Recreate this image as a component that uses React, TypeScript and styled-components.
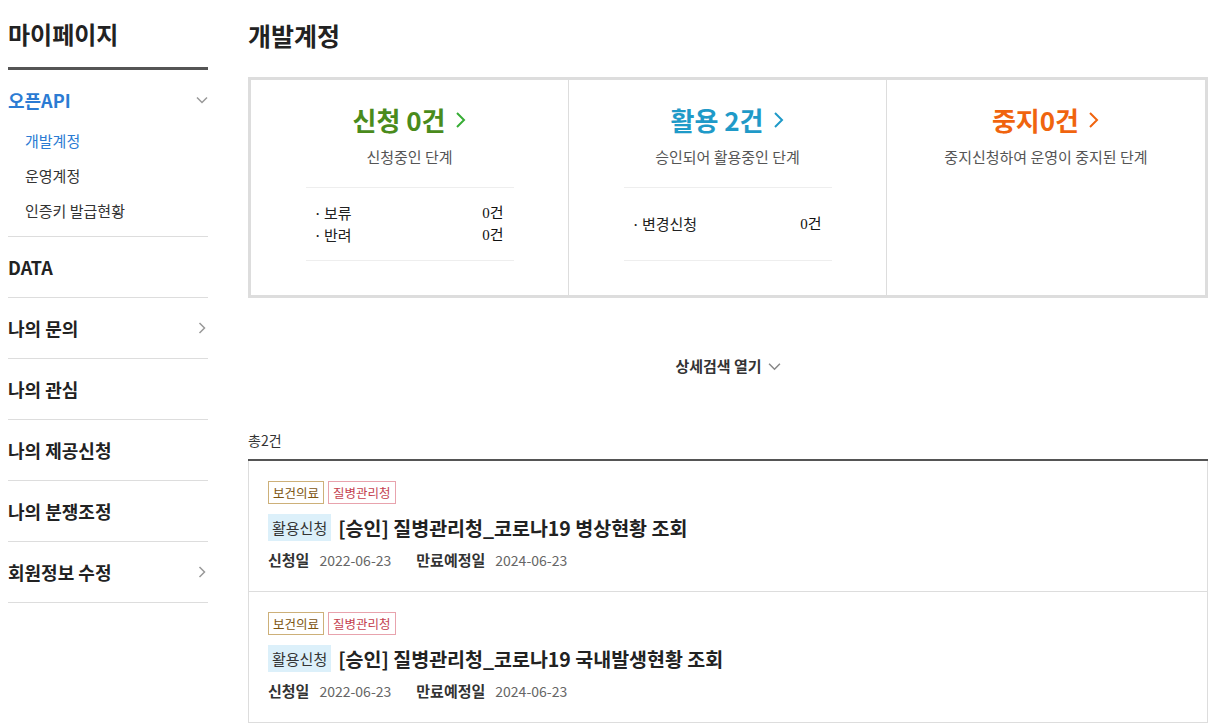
import React from 'react';
import styled, { createGlobalStyle } from 'styled-components';

const GlobalStyle = createGlobalStyle`
  body {
    margin: 0;
    background: #fff;
    font-family: 'Noto Sans CJK KR', 'Noto Sans', sans-serif;
    color: #222;
  }
  ul { margin: 0; padding: 0; list-style: none; }
`;

const Page = styled.div`
  display: flex;
  gap: 40px;
  padding-left: 8px;
  width: 1200px;
`;

const Sidebar = styled.aside`
  width: 200px;
  flex-shrink: 0;
`;

const SideTitle = styled.h2`
  margin: 0;
  padding: 18px 0 17px;
  font-size: 24px;
  line-height: 32px;
  font-weight: 700;
  color: #222;
  border-bottom: 3px solid #555;
`;

const MenuGroup = styled.li`
  border-bottom: 1px solid #ddd;
`;

const MenuHead = styled.div<{ $active?: boolean; $open?: boolean }>`
  display: flex;
  justify-content: space-between;
  align-items: center;
  height: ${p => (p.$open ? '20px' : '60px')};
  padding-top: ${p => (p.$open ? '20px' : '0')};
  font-size: 18px;
  font-weight: 700;
  line-height: 20px;
  color: ${p => (p.$active ? '#2b7bd3' : '#222')};
  box-sizing: content-box;
`;

const SubList = styled.ul`
  padding: 13px 0 8px 17px;
`;

const SubItem = styled.li<{ $active?: boolean }>`
  font-size: 15px;
  line-height: 35px;
  color: ${p => (p.$active ? '#2b7bd3' : '#333')};
`;

const Main = styled.main`
  width: 960px;
`;

const PageTitle = styled.h1`
  margin: 0 0 27px;
  padding-top: 20px;
  font-size: 25px;
  line-height: 30px;
  font-weight: 700;
  color: #222;
`;

const StatBox = styled.div`
  display: grid;
  grid-template-columns: repeat(3, 1fr);
  border: 3px solid #ddd;
`;

const StatCol = styled.div`
  display: flex;
  flex-direction: column;
  align-items: center;
  padding: 25px 0 34px;
  border-right: 1px solid #ddd;
  &:last-child { border-right: none; }
`;

const StatHead = styled.div<{ $color: string }>`
  display: flex;
  align-items: center;
  gap: 8px;
  font-size: 26px;
  line-height: 30px;
  font-weight: 700;
  color: ${p => p.$color};
`;

const StatDesc = styled.p`
  margin: 12px 0 0;
  font-size: 15px;
  line-height: 20px;
  color: #555;
`;

const StatList = styled.ul`
  display: flex;
  flex-direction: column;
  justify-content: center;
  width: 208px;
  min-height: 74px;
  margin-top: 20px;
  padding: 0 10px 0 8px;
  box-sizing: border-box;
  border-top: 1px solid #eee;
  border-bottom: 1px solid #eee;
`;

const StatRow = styled.li`
  display: flex;
  justify-content: space-between;
  font-size: 15px;
  line-height: 22px;
  color: #222;
  &::before {
    content: '·';
    margin-right: 2px;
  }
`;

const StatLabel = styled.span`
  flex: 1;
`;

const StatValue = styled.span`
  font-family: 'Liberation Serif', 'Noto Sans CJK KR', serif;
  font-size: 15px;
  color: #111;
`;

const SearchToggle = styled.button`
  display: flex;
  align-items: center;
  gap: 6px;
  margin: 55px auto 0;
  padding: 0;
  border: none;
  background: none;
  font-family: inherit;
  font-size: 15px;
  line-height: 26px;
  font-weight: 700;
  color: #333;
`;

const Total = styled.p`
  margin: 51px 0 9px;
  font-size: 14px;
  line-height: 20px;
  color: #333;
`;

const List = styled.ul`
  border-top: 2px solid #555;
`;

const Item = styled.li`
  padding: 20px 18px 21px 19px;
  border: 1px solid #ddd;
  border-top: none;
`;

const Tags = styled.div`
  display: flex;
  gap: 4px;
`;

const Tag = styled.span<{ $tone: 'field' | 'org' }>`
  padding: 0 4px;
  font-size: 12.5px;
  line-height: 21px;
  border: 1px solid ${p => (p.$tone === 'field' ? '#cdb079' : '#e8a3ad')};
  color: ${p => (p.$tone === 'field' ? '#7d5512' : '#c4414f')};
`;

const TitleRow = styled.div`
  display: flex;
  align-items: center;
  gap: 7px;
  margin-top: 10px;
`;

const Badge = styled.span`
  padding: 0 4px;
  background: #dcf0fa;
  font-size: 15px;
  line-height: 27px;
  color: #333;
`;

const ItemTitle = styled.h3`
  margin: 0;
  font-size: 19.5px;
  line-height: 27px;
  font-weight: 700;
  color: #222;
`;

const Dates = styled.div`
  display: flex;
  align-items: baseline;
  margin-top: 9px;
  line-height: 20px;
`;

const DateLabel = styled.span`
  font-size: 15px;
  font-weight: 700;
  color: #333;
  margin-right: 10px;
`;

const DateValue = styled.span`
  font-size: 14px;
  color: #666;
  margin-right: 25px;
`;

const Chevron = ({ dir, color, size = 12, width = 1.5 }: { dir: 'down' | 'right'; color: string; size?: number; width?: number }) => (
  <svg width={size} height={size} viewBox="0 0 12 12" fill="none" stroke={color} strokeWidth={width}>
    {dir === 'down' ? <polyline points="1,3.5 6,8.5 11,3.5" /> : <polyline points="3.5,1 8.5,6 3.5,11" />}
  </svg>
);

const BigChevron = ({ color }: { color: string }) => (
  <svg width="13" height="18" viewBox="0 0 13 18" fill="none" stroke={color} strokeWidth={2}>
    <polyline points="3,2 10,9 3,16" />
  </svg>
);

const stats = [
  { title: '신청 0건', color: '#4a8b1c', arrow: '#37ad35', desc: '신청중인 단계', rows: [['보류', '0건'], ['반려', '0건']] },
  { title: '활용 2건', color: '#1f9ac8', arrow: '#1f9ac8', desc: '승인되어 활용중인 단계', rows: [['변경신청', '0건']] },
  { title: '중지0건', color: '#f0640e', arrow: '#f0640e', desc: '중지신청하여 운영이 중지된 단계', rows: [] },
];

const items = [
  { title: '[승인] 질병관리청_코로나19 병상현황 조회' },
  { title: '[승인] 질병관리청_코로나19 국내발생현황 조회' },
];

const menu = [
  { name: 'DATA' },
  { name: '나의 문의', arrow: true },
  { name: '나의 관심' },
  { name: '나의 제공신청' },
  { name: '나의 분쟁조정' },
  { name: '회원정보 수정', arrow: true },
];

const App = () => (
  <>
    <GlobalStyle />
    <Page>
      <Sidebar>
        <SideTitle>마이페이지</SideTitle>
        <ul>
          <MenuGroup>
            <MenuHead $active $open>
              오픈API
              <Chevron dir="down" color="#999" />
            </MenuHead>
            <SubList>
              <SubItem $active>개발계정</SubItem>
              <SubItem>운영계정</SubItem>
              <SubItem>인증키 발급현황</SubItem>
            </SubList>
          </MenuGroup>
          {menu.map(m => (
            <MenuGroup key={m.name}>
              <MenuHead>
                {m.name}
                {m.arrow && <Chevron dir="right" color="#999" />}
              </MenuHead>
            </MenuGroup>
          ))}
        </ul>
      </Sidebar>
      <Main>
        <PageTitle>개발계정</PageTitle>
        <StatBox>
          {stats.map(s => (
            <StatCol key={s.title}>
              <StatHead $color={s.color}>
                {s.title}
                <BigChevron color={s.arrow} />
              </StatHead>
              <StatDesc>{s.desc}</StatDesc>
              {s.rows.length > 0 && (
                <StatList>
                  {s.rows.map(([label, value]) => (
                    <StatRow key={label}>
                      <StatLabel>{label}</StatLabel>
                      <StatValue>{value}</StatValue>
                    </StatRow>
                  ))}
                </StatList>
              )}
            </StatCol>
          ))}
        </StatBox>
        <SearchToggle>
          상세검색 열기
          <Chevron dir="down" color="#888" size={13} width={1.4} />
        </SearchToggle>
        <Total>총2건</Total>
        <List>
          {items.map(item => (
            <Item key={item.title}>
              <Tags>
                <Tag $tone="field">보건의료</Tag>
                <Tag $tone="org">질병관리청</Tag>
              </Tags>
              <TitleRow>
                <Badge>활용신청</Badge>
                <ItemTitle>{item.title}</ItemTitle>
              </TitleRow>
              <Dates>
                <DateLabel>신청일</DateLabel>
                <DateValue>2022-06-23</DateValue>
                <DateLabel>만료예정일</DateLabel>
                <DateValue>2024-06-23</DateValue>
              </Dates>
            </Item>
          ))}
        </List>
      </Main>
    </Page>
  </>
);

export default App;
